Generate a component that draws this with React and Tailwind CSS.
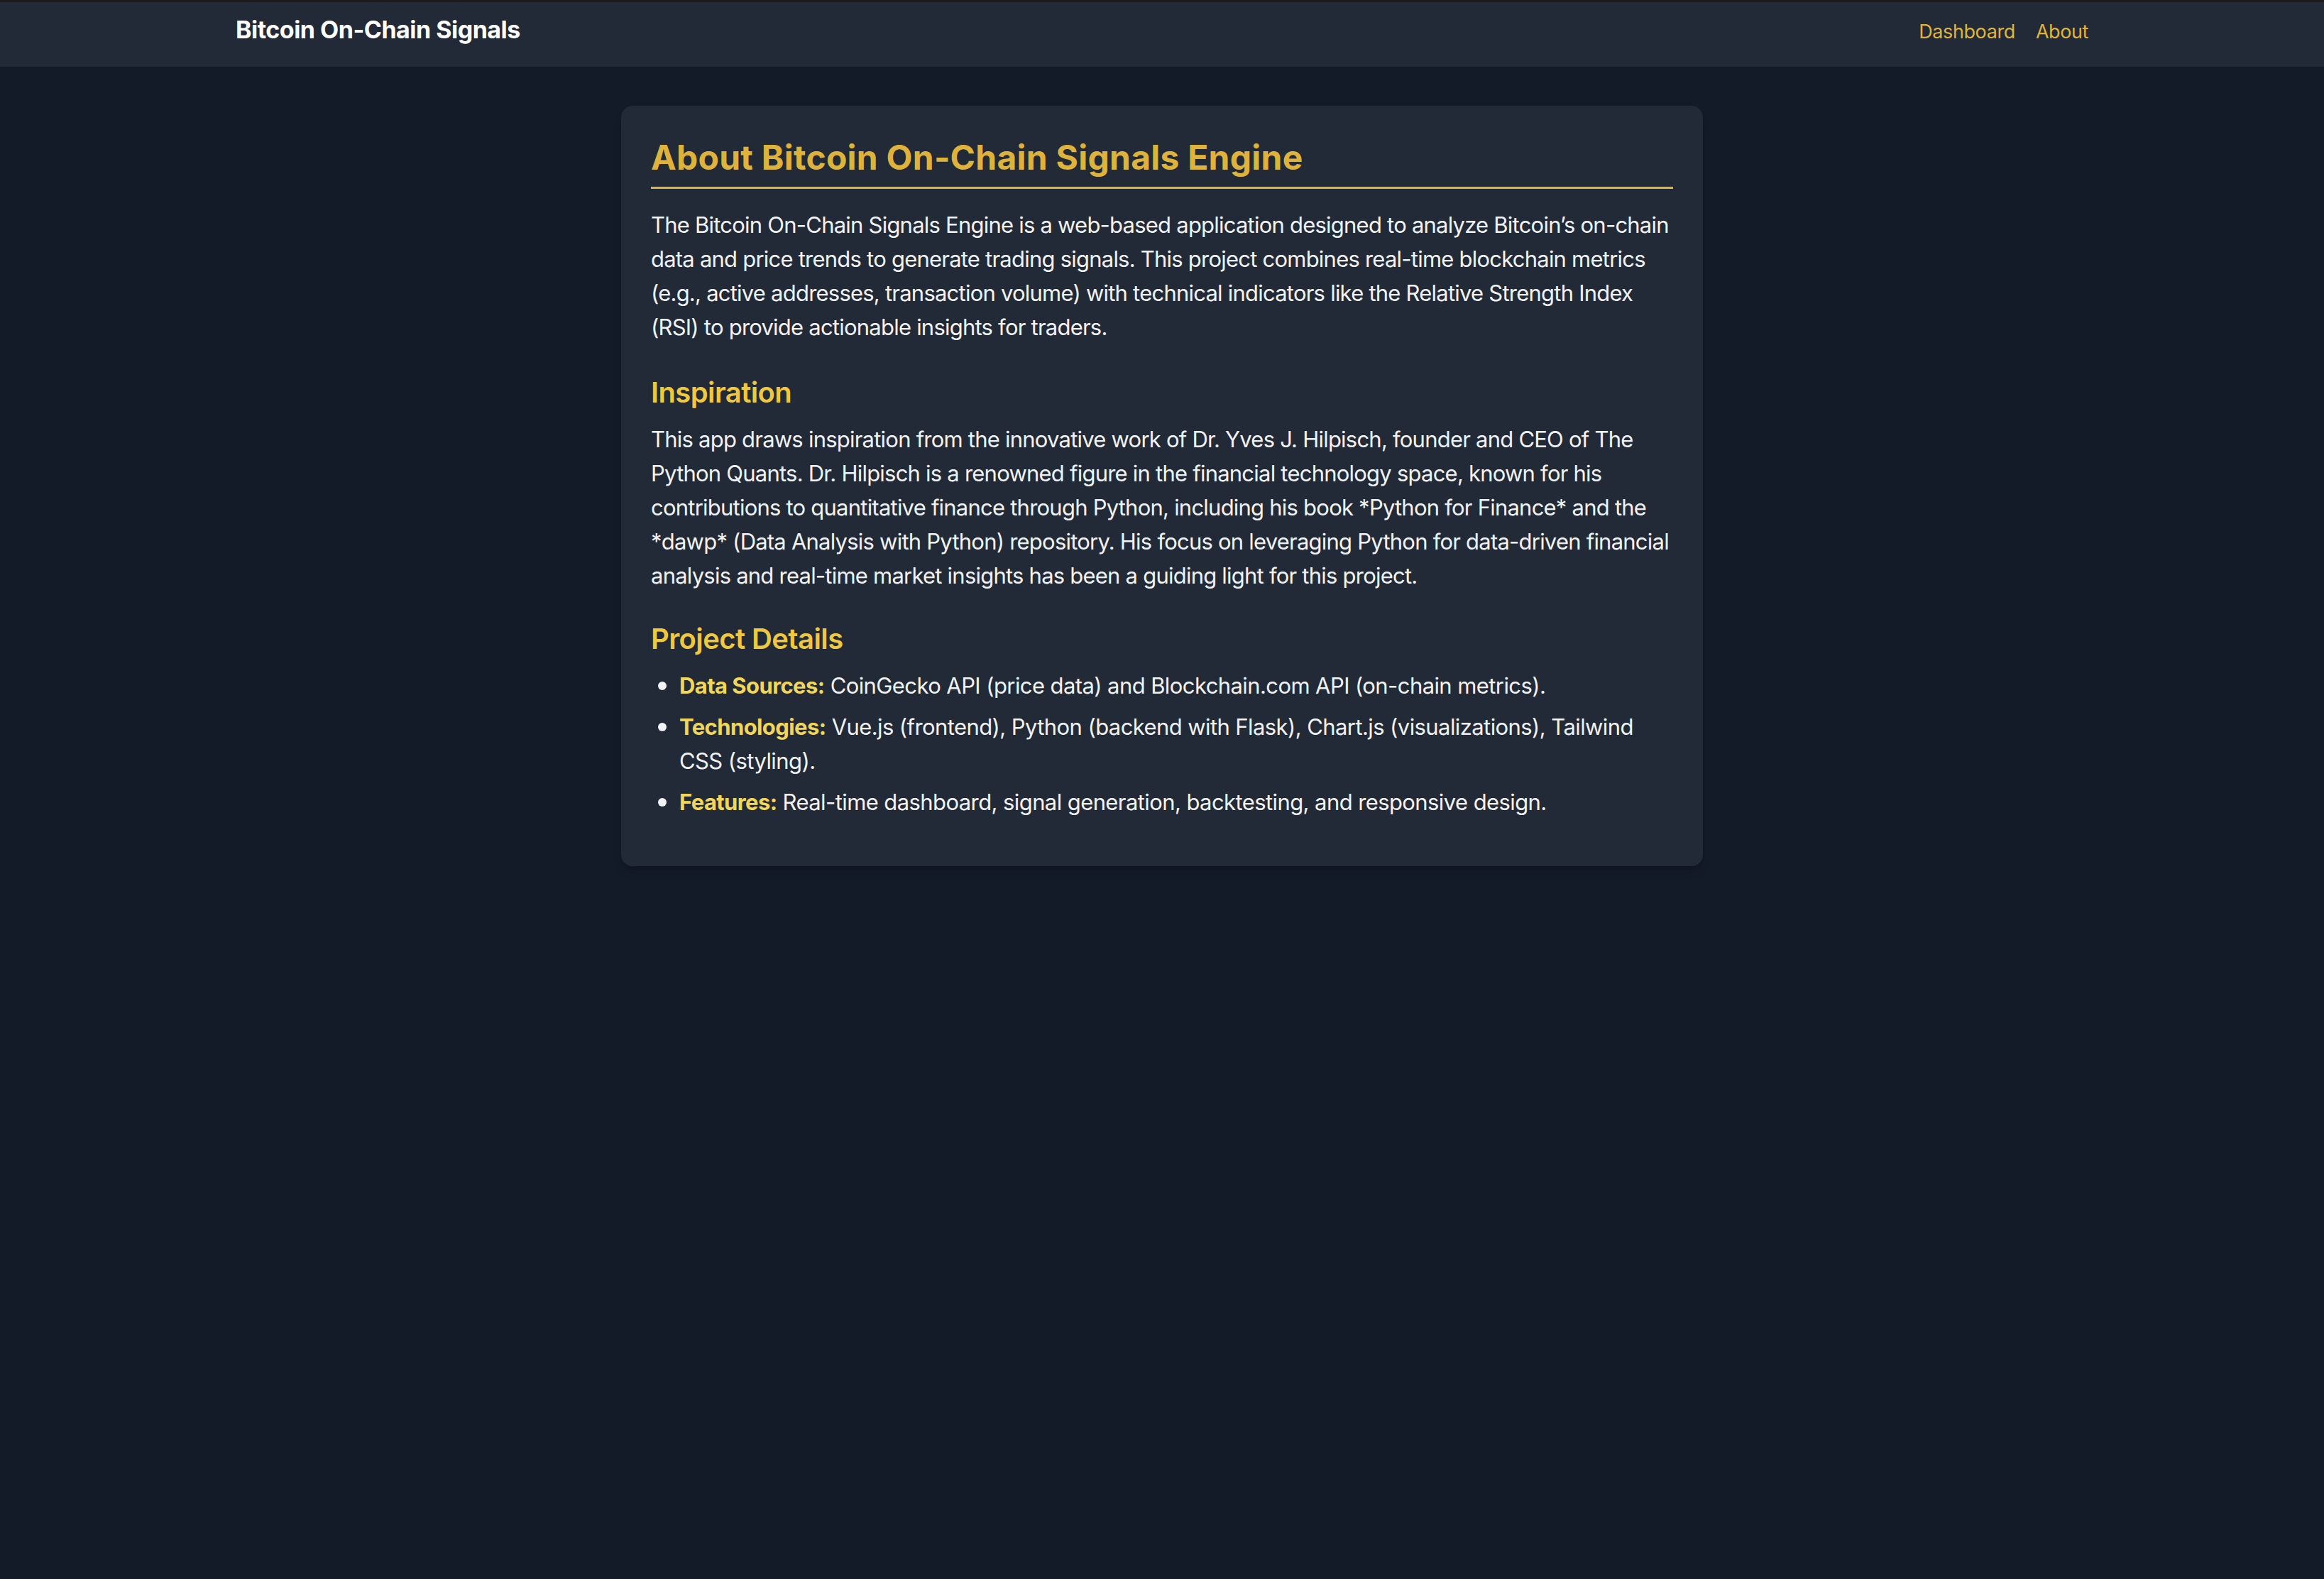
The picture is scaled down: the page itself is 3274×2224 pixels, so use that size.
const navLinks = ['Dashboard', 'About'];

const details = [
  {
    label: 'Data Sources:',
    text: 'CoinGecko API (price data) and Blockchain.com API (on-chain metrics).',
  },
  {
    label: 'Technologies:',
    text: 'Vue.js (frontend), Python (backend with Flask), Chart.js (visualizations), Tailwind CSS (styling).',
  },
  {
    label: 'Features:',
    text: 'Real-time dashboard, signal generation, backtesting, and responsive design.',
  },
];

const Navbar = () => {
  return (
    <>
      <div className="h-[3px] bg-[#1b1b1b]"></div>
      <nav className="h-[91px] bg-[#222a37]">
        <div className="w-[2610px] mx-auto flex flex-row justify-between items-baseline pt-[17px]">
          <a href="#" className="text-[34px] leading-[44px] font-bold text-white tracking-[-0.015em]">
            Bitcoin On-Chain Signals
          </a>
          <div className="flex flex-row items-baseline gap-[29px]">
            {navLinks.map(link => (
              <a
                key={link}
                href="#"
                className="text-[27px] leading-[40px] text-[#e0b43c] tracking-[-0.015em] hover:text-[#f0cc4a]"
              >
                {link}
              </a>
            ))}
          </div>
        </div>
      </nav>
    </>
  );
};

const About = () => {
  return (
    <div className="w-[1524px] mx-auto mt-[55px] bg-[#222a37] rounded-2xl shadow-lg px-[42px] pt-[41px] pb-[66px] text-[#f1f2f4]">
      <h1 className="text-[48px] leading-[64px] font-bold text-[#dfb33b] tracking-[0.005em] pb-[9px] border-b-[3px] border-[#dfb33b]">
        About Bitcoin On-Chain Signals Engine
      </h1>
      <p className="mt-[27px] text-[31px] leading-[48px] tracking-[-0.025em]">
        The Bitcoin On-Chain Signals Engine is a web-based application designed to analyze Bitcoin’s on-chain
        data and price trends to generate trading signals. This project combines real-time blockchain metrics
        (e.g., active addresses, transaction volume) with technical indicators like the Relative Strength Index
        (RSI) to provide actionable insights for traders.
      </p>

      <h2 className="mt-[40px] text-[40px] leading-[56px] font-semibold text-[#efc83f] tracking-[-0.015em]">
        Inspiration
      </h2>
      <p className="mt-[14px] text-[31px] leading-[48px] tracking-[-0.025em]">
        This app draws inspiration from the innovative work of Dr. Yves J. Hilpisch, founder and CEO of The
        Python Quants. Dr. Hilpisch is a renowned figure in the financial technology space, known for his
        contributions to quantitative finance through Python, including his book *Python for Finance* and the
        *dawp* (Data Analysis with Python) repository. His focus on leveraging Python for data-driven financial
        analysis and real-time market insights has been a guiding light for this project.
      </p>

      <h2 className="mt-[37px] text-[40px] leading-[56px] font-semibold text-[#efc83f] tracking-[-0.015em]">
        Project Details
      </h2>
      <ul className="mt-[12px] list-disc pl-[40px] space-y-[8px] text-[31px] leading-[48px] tracking-[-0.019em] marker:text-[36px]">
        {details.map(item => (
          <li key={item.label}>
            <strong className="font-bold text-[#f2d65a]">{item.label}</strong> {item.text}
          </li>
        ))}
      </ul>
    </div>
  );
};

export default function App() {
  return (
    <div className="min-h-screen bg-[#131a28] font-['Inter',sans-serif] antialiased">
      <Navbar />
      <About />
    </div>
  );
}
